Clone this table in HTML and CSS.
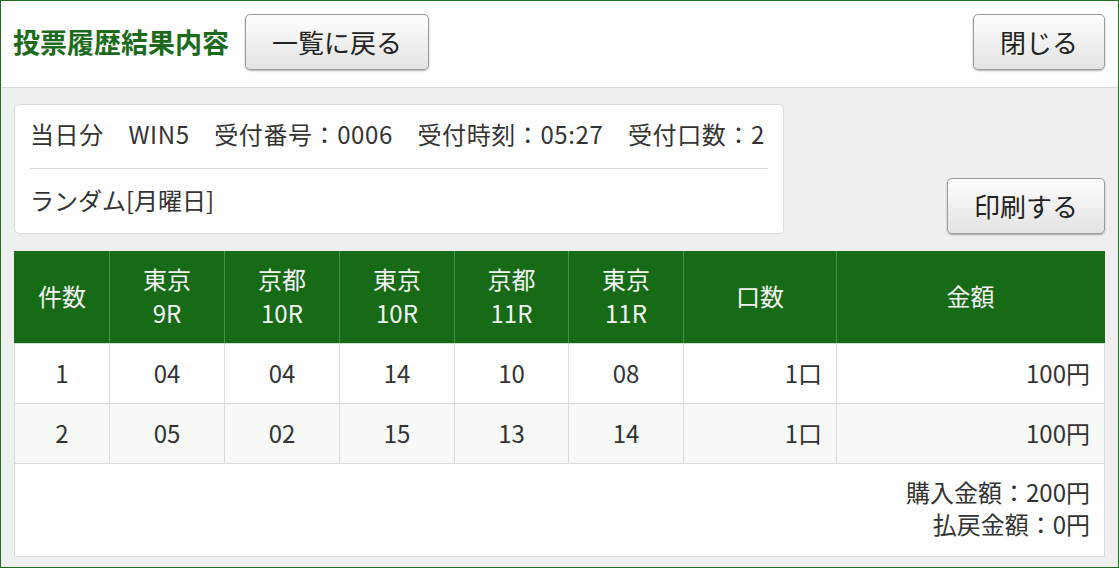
FILE: index.html
```html
<!DOCTYPE html>
<html lang="ja">
<head>
<meta charset="utf-8">
<title>投票履歴結果内容</title>
<link rel="stylesheet" href="styles.css">
</head>
<body>
<div class="frame">
  <header class="topbar">
    <div class="topbar-left">
      <h1 class="title">投票履歴結果内容</h1>
      <button class="btn">一覧に戻る</button>
    </div>
    <button class="btn">閉じる</button>
  </header>
  <main class="content">
    <div class="summary-row">
      <div class="info-card">
        <div class="info-line info-first">当日分　WIN5　受付番号：0006　受付時刻：05:27　受付口数：2</div>
        <div class="info-line info-second">ランダム[月曜日]</div>
      </div>
      <button class="btn">印刷する</button>
    </div>
    <table class="bets">
      <colgroup>
        <col class="c-no"><col class="c-race"><col class="c-race"><col class="c-race"><col class="c-race4"><col class="c-race"><col class="c-units"><col class="c-amount">
      </colgroup>
      <thead>
        <tr>
          <th>件数</th>
          <th>東京<br>9R</th>
          <th>京都<br>10R</th>
          <th>東京<br>10R</th>
          <th>京都<br>11R</th>
          <th>東京<br>11R</th>
          <th>口数</th>
          <th>金額</th>
        </tr>
      </thead>
      <tbody>
        <tr>
          <td>1</td><td>04</td><td>04</td><td>14</td><td>10</td><td>08</td><td class="num">1口</td><td class="num">100円</td>
        </tr>
        <tr class="alt">
          <td>2</td><td>05</td><td>02</td><td>15</td><td>13</td><td>14</td><td class="num">1口</td><td class="num">100円</td>
        </tr>
      </tbody>
      <tfoot>
        <tr>
          <td colspan="8" class="totals">購入金額：200円<br>払戻金額：0円</td>
        </tr>
      </tfoot>
    </table>
  </main>
</div>
</body>
</html>
```

FILE: styles.css
```css
html, body {
  margin: 0;
  padding: 0;
}
body {
  width: 1119px;
  height: 568px;
  font-family: "Noto Sans CJK JP", "Noto Sans", sans-serif;
  color: #333;
  background: #fff;
  overflow: hidden;
}
.frame {
  box-sizing: border-box;
  width: 1119px;
  height: 568px;
  border: 1px solid #1e6e1e;
  display: flex;
  flex-direction: column;
  background: #efefef;
}
.topbar {
  height: 87px;
  box-sizing: border-box;
  background: #fff;
  border-bottom: 1px solid #dadada;
  display: flex;
  align-items: flex-start;
  justify-content: space-between;
  padding: 13px 13px 0 12px;
}
.topbar-left {
  display: flex;
  align-items: center;
  gap: 16px;
}
.title {
  margin: 0;
  font-size: 27px;
  font-weight: bold;
  color: #1c6b1c;
  line-height: 56px;
}
.btn {
  font-family: "Noto Sans CJK JP", "Noto Sans", sans-serif;
  font-size: 26px;
  color: #222;
  height: 56px;
  padding: 0 26px;
  border: 1px solid #9a9a9a;
  border-radius: 5px;
  background: linear-gradient(#fefefe, #e3e3e3);
  box-shadow: 0 1px 2px rgba(0, 0, 0, 0.3);
  line-height: 52px;
  cursor: pointer;
}
.content {
  padding: 16px 13px 0 13px;
  flex: 1;
}
.summary-row {
  display: flex;
  align-items: flex-end;
  justify-content: space-between;
}
.info-card {
  width: 770px;
  box-sizing: border-box;
  background: #fff;
  border: 1px solid #dcdcdc;
  border-radius: 5px;
  padding: 0 15px;
  font-size: 24px;
}
.info-line {
  line-height: 32px;
  white-space: nowrap;
}
.info-first {
  padding: 13px 0 18px;
  border-bottom: 1px solid #d8d8d8;
  letter-spacing: 0.6px;
}
.info-second {
  padding: 15px 0 17px;
}
.bets {
  margin-top: 17px;
  width: 1091px;
  border-collapse: collapse;
  table-layout: fixed;
  font-size: 24px;
  background: #fff;
}
.c-no { width: 95px; }
.c-race { width: 115px; }
.c-race4 { width: 114px; }
.c-units { width: 153px; }
.c-amount { width: 268px; }
.bets th {
  background: #176b17;
  color: #f4f4f4;
  font-weight: normal;
  line-height: 34px;
  height: 92px;
  padding: 0 0 2px;
  box-sizing: border-box;
  border-left: 1px solid #4d8c4d;
  border-right: 1px solid #4d8c4d;
  border-bottom: 1px solid #cfe0cf;
}
.bets th:first-child { border-left: 1px solid #176b17; }
.bets th:last-child { border-right: 1px solid #176b17; }
.bets td {
  border: 1px solid #dadada;
  text-align: center;
  height: 59px;
  padding: 0;
  line-height: 32px;
}
.bets td.num {
  text-align: right;
  padding-right: 14px;
}
.bets tr.alt td {
  background: #f6f9f6;
}
.bets td.totals {
  text-align: right;
  height: 92px;
  padding: 12px 14px 16px 0;
  box-sizing: border-box;
}
```
